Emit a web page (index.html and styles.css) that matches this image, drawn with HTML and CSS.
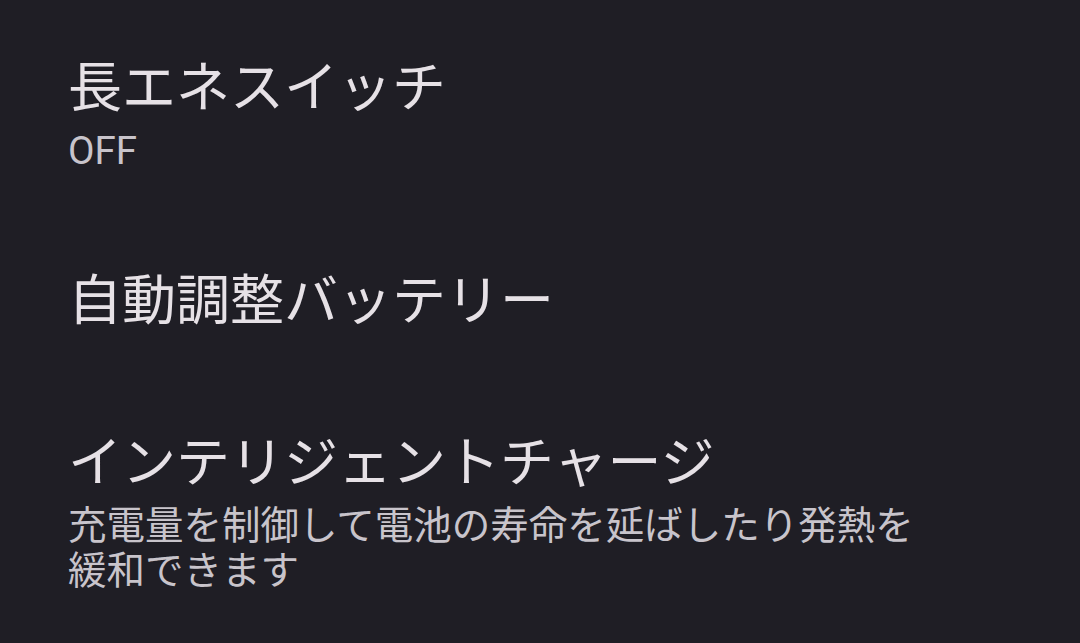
FILE: index.html
```html
<!DOCTYPE html>
<html lang="ja">
<head>
<meta charset="utf-8">
<link rel="stylesheet" href="styles.css">
</head>
<body>
<div class="list">
  <div class="item">
    <div class="title">長エネスイッチ</div>
    <div class="sub">OFF</div>
  </div>
  <div class="item">
    <div class="title">自動調整バッテリー</div>
  </div>
  <div class="item">
    <div class="title">インテリジェントチャージ</div>
    <div class="sub">充電量を制御して電池の寿命を延ばしたり発熱を<br>緩和できます</div>
  </div>
</div>
</body>
</html>
```
FILE: styles.css
```css
html, body {
  margin: 0;
  padding: 0;
  background: #1f1e25;
  width: 1080px;
  height: 643px;
  overflow: hidden;
}
.list {
  padding-top: 8px;
  font-family: "Roboto", "Noto Sans CJK JP", sans-serif;
}
.item {
  padding: 48px 68px;
}
.title {
  font-size: 54px;
  line-height: 66px;
  color: #e6e1e6;
}
.sub {
  margin-top: 6px;
  font-size: 38.5px;
  line-height: 45px;
  color: #c8c4cb;
}
```
